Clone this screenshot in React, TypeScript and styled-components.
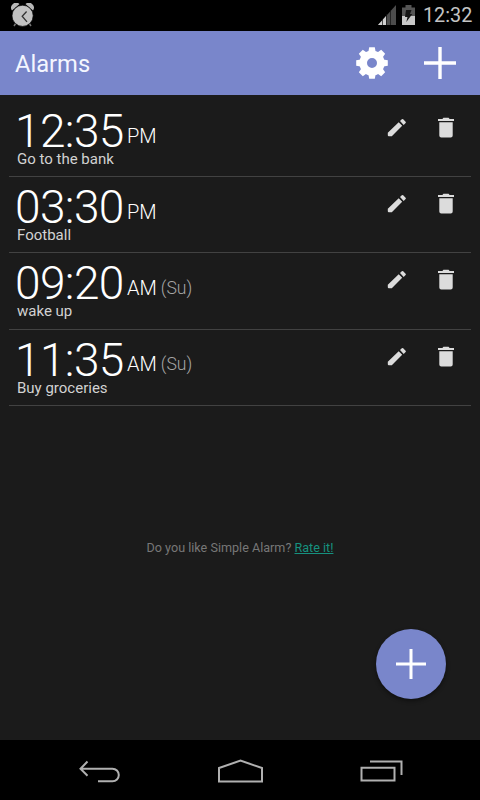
import React from "react";
import styled, { createGlobalStyle } from "styled-components";

const GlobalStyle = createGlobalStyle`
  * { box-sizing: border-box; }
  body { margin: 0; background: #1b1b1b; }
`;

const Screen = styled.div`
  width: 480px;
  height: 800px;
  display: flex;
  flex-direction: column;
  overflow: hidden;
  background: #1b1b1b;
  color: #fff;
  font-family: Roboto, sans-serif;
`;

const StatusBar = styled.div`
  flex: none;
  height: 31px;
  display: flex;
  align-items: center;
  padding: 0 7px 0 11px;
  background: #000;
`;

const Spacer = styled.div`
  flex: 1;
`;

const StatusIcon = styled.svg<{ $gap?: number }>`
  display: block;
  flex: none;
  margin: 0 ${(p) => p.$gap ?? 0}px 1px 0;
`;

const Clock = styled.span`
  width: 50px;
  font-size: 19.8px;
  line-height: 24px;
  color: #c4c4c4;
  white-space: nowrap;
`;

const AppBar = styled.header`
  flex: none;
  height: 64px;
  display: flex;
  align-items: center;
  padding: 0 24px 0 15px;
  background: #7986cb;
`;

const Title = styled.h1`
  flex: 1;
  margin: 2px 0 0;
  font-size: 23.7px;
  line-height: 28px;
  font-weight: 400;
  color: #f4f6ff;
`;

const IconButton = styled.button<{ $gap?: number }>`
  display: block;
  flex: none;
  margin: 0 ${(p) => p.$gap ?? 0}px 0 0;
  padding: 0;
  border: 0;
  background: none;
  svg { display: block; }
`;

const AlarmList = styled.ul`
  flex: none;
  list-style: none;
  margin: 0;
  padding: 6px 9px 0 9px;
`;

const AlarmRow = styled.li`
  display: flex;
  height: 76.2px;
  padding: 11px 17px 0 6px;
  border-bottom: 1px solid #424242;
`;

const Details = styled.div`
  flex: 1;
`;

const TimeLine = styled.div`
  display: flex;
  height: 38px;
`;

const Time = styled.span`
  width: 112px;
  font-size: 46px;
  line-height: 38px;
  font-weight: 300;
  letter-spacing: -0.6px;
  white-space: nowrap;
`;

const Period = styled.span`
  margin-top: 13.6px;
  font-size: 20px;
  line-height: 20px;
  font-weight: 300;
`;

const Days = styled(Period)`
  margin-left: 4px;
  font-size: 17.6px;
  color: #a5a5a5;
`;

const Label = styled.div`
  padding-left: 2px;
  font-size: 15px;
  line-height: 18px;
  color: #d2d2d2;
`;

const Actions = styled.div`
  display: flex;
  align-items: flex-start;
  padding-top: 5px;
`;

const RatePrompt = styled.p`
  margin: 134px 0 0;
  text-align: center;
  font-size: 12.6px;
  line-height: 16px;
  color: #777;
`;

const RateLink = styled.a`
  color: #16917f;
  text-decoration: underline;
`;

const AddRow = styled.div`
  display: flex;
  justify-content: flex-end;
  padding: 0 34px 41px 0;
`;

const AddButton = styled.button`
  display: grid;
  place-items: center;
  width: 70px;
  height: 70px;
  padding: 0;
  border: 0;
  border-radius: 50%;
  background: #7986cb;
  box-shadow: 0 2px 4px rgba(0, 0, 0, 0.45);
`;

const NavBar = styled.nav`
  flex: none;
  height: 60px;
  display: flex;
  align-items: center;
  justify-content: space-between;
  padding: 3px 77px 0 78px;
  background: #000;
`;

const Plus = ({ size, stroke }: { size: number; stroke: number }) => (
  <svg width={size} height={size} viewBox={`0 0 ${size} ${size}`}>
    <path d={`M${size / 2} 0V${size}M0 ${size / 2}H${size}`} stroke="#fff" strokeWidth={stroke} />
  </svg>
);

const Gear = () => (
  <svg width="32" height="32" viewBox="0 0 32 32" fill="none" stroke="#fff">
    <circle cx="16" cy="16" r="8.8" strokeWidth="7.6" />
    {[0, 45, 90, 135, 180, 225, 270, 315].map((angle) => (
      <path
        key={angle}
        d="M13.2 0.2h5.6l.8 4.6h-7.2z"
        fill="#fff"
        stroke="none"
        transform={`rotate(${angle} 16 16)`}
      />
    ))}
  </svg>
);

const Pencil = () => (
  <svg width="20" height="21" viewBox="0 -1 20 21" fill="#dcdcdc">
    <path d="M0.8 14.7L11.7 4.3L15.2 7.8L4.8 18.2H1.8Q0.8 18.2 0.8 17.2zM13 3.1L14.8 1.3Q15.5 0.6 16.2 1.3L18.6 3.7Q19.3 4.4 18.6 5.1L16.7 6.9z" />
  </svg>
);

const Trash = () => (
  <svg width="16" height="22" viewBox="0 0 16 22" fill="#dcdcdc">
    <path d="M0 2h4.4l1-1.2h5.2l1 1.2H16v2H0zM1.3 5.2h13.4v13.2a2 2 0 0 1-2 2H3.3a2 2 0 0 1-2-2z" />
  </svg>
);

const alarms = [
  { time: "12:35", period: "PM", days: "", label: "Go to the bank" },
  { time: "03:30", period: "PM", days: "", label: "Football" },
  { time: "09:20", period: "AM", days: "(Su)", label: "wake up" },
  { time: "11:35", period: "AM", days: "(Su)", label: "Buy groceries" },
];

export default function App() {
  return (
    <>
      <GlobalStyle />
      <Screen>
        <StatusBar>
          <StatusIcon width="24" height="24" viewBox="0 0 24 24">
            <path d="M5 20l-2 3M18 20l2 3" stroke="#777" strokeWidth="1.5" />
            <path d="M1 7.5A5 5 0 0 1 8.5 1zM22 7.5A5 5 0 0 0 14.5 1z" fill="#b8b8b8" />
            <circle cx="11.6" cy="12.8" r="10.6" fill="#c2c2c2" stroke="#000" strokeWidth=".7" />
            <path d="M15.6 8.5L11.2 13.2l4.8 5.6" fill="none" stroke="#333" strokeWidth="1.3" />
          </StatusIcon>
          <Spacer />
          <StatusIcon width="18" height="20" viewBox="0 0 18 20" $gap={6}>
            <path d="M0 20L18 0V20z" fill="#4c4c4c" />
            <path d="M0 20L8 11.1V20z" fill="#cfcfcf" />
            <path d="M4.5 14V20M8.5 9V20M12.5 5V20" stroke="#111" strokeWidth=".7" />
          </StatusIcon>
          <StatusIcon width="13" height="20" viewBox="0 0 13 20" $gap={8}>
            <path d="M3.5 0h6v2.5H13V11H0V2.5h3.5z" fill="#555" />
            <path d="M0 11h13v9H0z" fill="#c8c8c8" />
            <path d="M4 5h5.5L8 9h2.3l-6 8 1.2-5H3z" fill="#151515" />
          </StatusIcon>
          <Clock>12:32</Clock>
        </StatusBar>
        <AppBar>
          <Title>Alarms</Title>
          <IconButton $gap={36} aria-label="Settings"><Gear /></IconButton>
          <IconButton aria-label="Add alarm"><Plus size={32} stroke={3.4} /></IconButton>
        </AppBar>
        <AlarmList>
          {alarms.map((a) => (
            <AlarmRow key={a.label}>
              <Details>
                <TimeLine>
                  <Time>{a.time}</Time>
                  <Period>{a.period}</Period>
                  {a.days && <Days>{a.days}</Days>}
                </TimeLine>
                <Label>{a.label}</Label>
              </Details>
              <Actions>
                <IconButton $gap={31} aria-label="Edit"><Pencil /></IconButton>
                <IconButton aria-label="Delete"><Trash /></IconButton>
              </Actions>
            </AlarmRow>
          ))}
        </AlarmList>
        <RatePrompt>
          Do you like Simple Alarm? <RateLink>Rate it!</RateLink>
        </RatePrompt>
        <Spacer />
        <AddRow>
          <AddButton aria-label="New alarm"><Plus size={30} stroke={3} /></AddButton>
        </AddRow>
        <NavBar>
          <IconButton aria-label="Back">
            <svg width="43" height="24" viewBox="0 0 43 24" fill="none" stroke="#b0b0b0" strokeWidth="2">
              <path d="M9.5 1.5L2.5 8.7l7 7M3 8.7h31.5a6.2 6.2 0 0 1 0 12.6H20" />
            </svg>
          </IconButton>
          <IconButton aria-label="Home">
            <svg width="46" height="25" viewBox="0 0 46 25" fill="none" stroke="#b0b0b0" strokeWidth="2">
              <path d="M1 22.5V9L22.500 1.600L44 9v13.500z" />
            </svg>
          </IconButton>
          <IconButton aria-label="Recent apps">
            <svg width="43" height="23" viewBox="0 0 43 23" fill="none" stroke="#b0b0b0" strokeWidth="2">
              <path d="M1.5 7.7h33v12.8h-33zM10 1.5h31.5v13.5" />
            </svg>
          </IconButton>
        </NavBar>
      </Screen>
    </>
  );
}
